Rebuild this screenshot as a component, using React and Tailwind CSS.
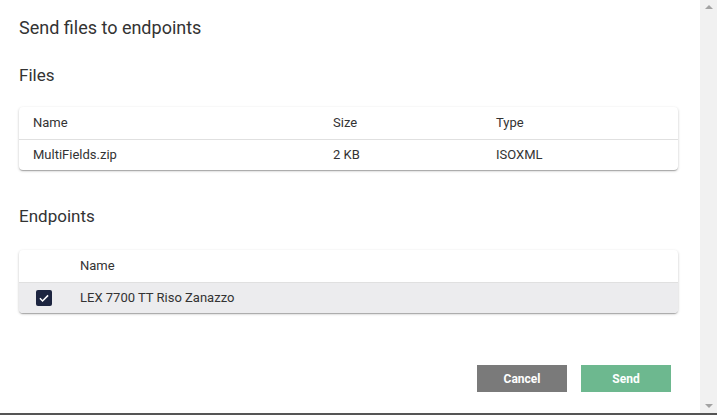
const CARD =
  "ml-[19px] mr-[22px] rounded bg-white shadow-[0_1px_3px_rgba(0,0,0,0.2),0_1px_1px_rgba(0,0,0,0.14),0_2px_1px_-1px_rgba(0,0,0,0.12)]";

const files = [{ name: "MultiFields.zip", size: "2 KB", type: "ISOXML" }];
const endpoints = [{ id: 1, name: "LEX 7700 TT Riso Zanazzo", checked: true }];

const Check = () => (
  <span className="flex h-4 w-4 items-center justify-center rounded-[2px] bg-[#1d2540]">
    <svg viewBox="0 0 24 24" className="h-[14px] w-[14px]" fill="none">
      <path d="M5 12.5l4.5 4.5L19 7.5" stroke="white" strokeWidth="2.6" />
    </svg>
  </span>
);

const Scrollbar = () => (
  <div className="flex w-[17px] flex-col items-center justify-between bg-[#f1f1f1] py-[5px]">
    <span className="h-0 w-0 border-x-[4px] border-b-[4px] border-x-transparent border-b-[#a3a3a3]" />
    <span className="h-0 w-0 border-x-[4px] border-t-[4px] border-x-transparent border-t-[#a3a3a3]" />
  </div>
);

export default function App() {
  return (
    <div className="flex h-[415px] w-[717px] flex-col overflow-hidden bg-white font-['Roboto',sans-serif] text-[#333]">
      <div className="flex min-h-0 flex-1">
        <div className="flex-1">
          <h1 className="ml-[19px] mt-[16px] text-[18px] leading-6 text-[#333]">
            Send files to endpoints
          </h1>

          <h2 className="ml-[19px] mt-[24px] text-[17px] leading-[22px]">Files</h2>
          <div className={`${CARD} mt-[21px]`}>
            <div className="grid h-[33px] grid-cols-[300px_163px_1fr] items-center border-b border-[#e0e0e0] pl-[14px] text-[13px]">
              <span>Name</span>
              <span>Size</span>
              <span>Type</span>
            </div>
            {files.map((f) => (
              <div
                key={f.name}
                className="grid h-[30px] grid-cols-[300px_163px_1fr] items-center pl-[14px] text-[13px]"
              >
                <span>{f.name}</span>
                <span>{f.size}</span>
                <span>{f.type}</span>
              </div>
            ))}
          </div>

          <h2 className="ml-[19px] mt-[35px] text-[17px] leading-[22px]">Endpoints</h2>
          <div className={`${CARD} mt-[23px] overflow-hidden`}>
            <div className="flex h-[33px] items-center border-b border-[#e0e0e0] pl-[61px] text-[13px]">
              Name
            </div>
            {endpoints.map((e) => (
              <div
                key={e.id}
                className="flex h-[30px] items-center bg-[#ececee] text-[13px]"
              >
                <span className="w-[61px] pl-[17px]">{e.checked && <Check />}</span>
                <span>{e.name}</span>
              </div>
            ))}
          </div>

          <div className="mr-[29px] mt-[52px] flex justify-end gap-[14px]">
            <button className="h-[27px] w-[90px] bg-[#7a7a7a] text-[12px] font-bold text-white">
              Cancel
            </button>
            <button className="h-[27px] w-[90px] bg-[#6db88f] text-[12px] font-bold text-white">
              Send
            </button>
          </div>
        </div>
        <Scrollbar />
      </div>
      <div className="h-[2px] bg-[#555]" />
    </div>
  );
}
